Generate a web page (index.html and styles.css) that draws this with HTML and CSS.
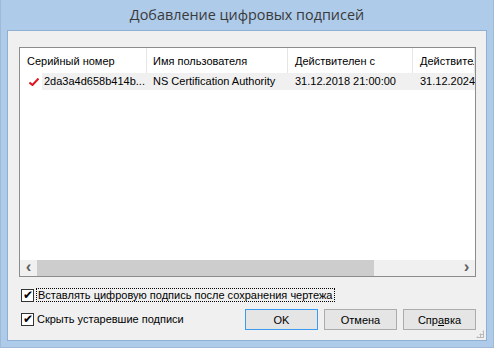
FILE: index.html
```html
<!DOCTYPE html>
<html lang="ru">
  <head>
    <meta charset="UTF-8" />
    <title>Добавление цифровых подписей</title>
    <link rel="stylesheet" href="styles.css">
  </head>
  <body>
    <div class="window">
      <div class="title">Добавление цифровых подписей</div>
      <div class="client">
        <!-- список подписей -->
        <div class="list">
          <div class="grid">
            <div class="row head">
              <div class="cell c1">Серийный номер</div>
              <div class="cell c2">Имя пользователя</div>
              <div class="cell c3">Действителен с</div>
              <div class="cell c4">Действительн</div>
            </div>
            <div class="row item">
              <div class="cell c1">
                <svg class="mark" width="10" height="8" viewBox="0 0 10 8">
                  <path d="M0.5 4.5 L3.5 7 L9.5 0.5" fill="none" stroke="#e0141e" stroke-width="2"/>
                </svg>
                <span class="sel">2da3a4d658b414b...</span>
              </div>
              <div class="cell c2 sel">NS Certification Authority</div>
              <div class="cell c3 sel">31.12.2018 21:00:00</div>
              <div class="cell c4 sel">31.12.2024 21:00:00</div>
            </div>
          </div>
          <div class="hscroll">
            <div class="arrow">&#x2039;</div>
            <div class="track"><div class="thumb"></div></div>
            <div class="arrow">&#x203A;</div>
          </div>
        </div>

        <label class="check focus">
          <span class="box">&#x2714;</span>
          <span class="text">Вставлять цифровую подпись после сохранения чертежа</span>
        </label>

        <div class="bottom">
          <label class="check">
            <span class="box">&#x2714;</span>
            <span class="text">Скрыть устаревшие подписи</span>
          </label>
          <div class="buttons">
            <button class="default">OK</button>
            <button>Отмена</button>
            <button>Спр<u>а</u>вка</button>
          </div>
        </div>
        <div class="grip"></div>
      </div>
    </div>
  </body>
</html>
```

FILE: styles.css
```css
body {
  margin: 0;
  font-family: Tahoma, "DejaVu Sans", sans-serif;
}
.window {
  width: 494px;
  height: 348px;
  box-sizing: border-box;
  background: #aecbea;
  border: 1px solid #9fb9d6;
  border-top: none;
  padding: 0 6px 6px;
  display: flex;
  flex-direction: column;
}
.title {
  height: 30px;
  line-height: 30px;
  text-align: center;
  font-family: "Open Sans", "Noto Sans", sans-serif;
  font-size: 14.4px;
  color: #3a3a3a;
}
.client {
  flex: 1;
  position: relative;
  background: #f0f0f0;
  border: 1px solid #8fb0d4;
  padding: 16px 10px 0 11px;
  display: flex;
  flex-direction: column;
  font-family: "Liberation Sans", Arial, sans-serif;
  font-size: 11px;
  color: #000;
}
.list {
  height: 230px;
  box-sizing: border-box;
  border: 1px solid #8c8c8c;
  background: #fff;
  display: flex;
  flex-direction: column;
  overflow: hidden;
}
.grid {
  flex: 1;
}
.row {
  display: flex;
  white-space: nowrap;
}
.head {
  height: 25px;
  align-items: center;
}
.head .cell {
  border-right: 1px solid #e5e5e5;
  height: 25px;
  line-height: 27px;
}
.item {
  height: 17px;
  line-height: 17px;
}
.cell {
  box-sizing: border-box;
  padding-left: 7px;
  overflow: hidden;
}
.c1 { width: 127px; }
.c2 { width: 141px; padding-left: 6px; }
.c3 { width: 125px; }
.c4 { width: 62px; }
.item .c1 {
  display: flex;
  align-items: center;
  padding-left: 9px;
}
.item .c1 .sel {
  padding-left: 2px;
  margin-left: 3px;
  flex: 1;
}
.sel {
  background: #f0f0f0;
}
.mark {
  flex: none;
}
.hscroll {
  height: 16px;
  display: flex;
  background: #f0f0f0;
}
.arrow {
  width: 17px;
  text-align: center;
  font-size: 17px;
  font-weight: bold;
  line-height: 14px;
  color: #606060;
}
.track {
  flex: 1;
  display: flex;
}
.thumb {
  width: 337px;
  background: #cdcdcd;
}
.check {
  display: flex;
  align-items: center;
  gap: 3px;
  height: 14px;
  padding-left: 2px;
}
.focus {
  margin-top: 11px;
}
.box {
  width: 11px;
  height: 11px;
  border: 1px solid #333;
  background: #fff;
  font-size: 12px;
  line-height: 11px;
  text-align: center;
  color: #000;
}
.focus .text {
  outline: 1px dotted #000;
  padding: 0 1px;
}
.bottom {
  margin-top: 7px;
  display: flex;
  justify-content: space-between;
  align-items: flex-start;
}
.bottom .check {
  margin-top: 3px;
}
.buttons {
  display: flex;
  gap: 6px;
}
button {
  width: 73px;
  height: 21px;
  border: 1px solid #acacac;
  background: #e5e5e5;
  font-family: "Liberation Sans", Arial, sans-serif;
  font-size: 11px;
  color: #000;
  padding: 0;
}
button.default {
  border-color: #3c9af0;
}
.grip {
  position: absolute;
  right: 2px;
  bottom: 2px;
  width: 8px;
  height: 8px;
  background:
    radial-gradient(circle, #b8b8b8 1px, transparent 1.2px) 0 0 / 3px 3px;
  clip-path: polygon(100% 0, 100% 100%, 0 100%);
}
```
